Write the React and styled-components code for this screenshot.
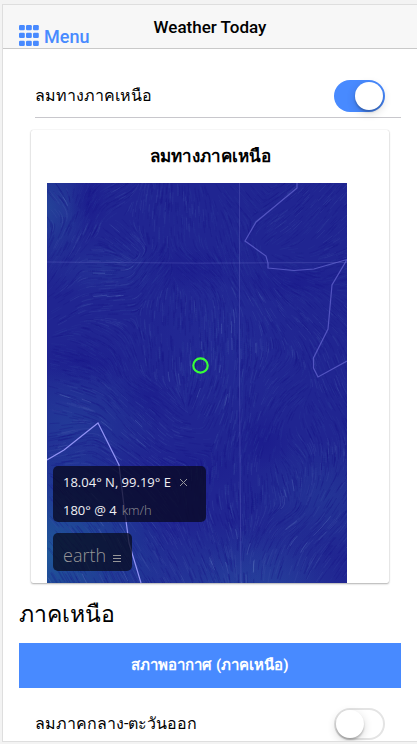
import React from "react";
import styled, { createGlobalStyle } from "styled-components";

const GlobalStyle = createGlobalStyle`
  *, *::before, *::after { box-sizing: border-box; }
  body {
    margin: 0;
    background: #f3f3f3;
    color: #000;
    font-family: Roboto, "Noto Sans", sans-serif;
    font-size: 16px;
  }
`;

const Frame = styled.div`
  display: flex;
  flex-direction: column;
  height: calc(100vh - 6px);
  margin: 4px 0 2px 2px;
  border: 1px solid #dedede;
  border-right: 0;
  background: #fff;
  overflow: hidden;
`;

const Header = styled.header`
  display: grid;
  grid-template-columns: 1fr auto 1fr;
  flex: none;
  height: 44px;
  padding: 0 16px;
  background: #f7f7f7;
  border-bottom: 1px solid #c9c9c9;
`;

const MenuButton = styled.button`
  display: flex;
  align-items: center;
  align-self: end;
  justify-self: start;
  gap: 5px;
  height: 24px;
  padding: 0;
  border: 0;
  background: none;
  color: #488aff;
  font: 500 18px/24px Roboto, sans-serif;
  cursor: pointer;
`;

const MenuIcon = styled.svg`
  width: 20px;
  height: 24px;
  fill: currentColor;
`;

const Title = styled.h1`
  margin: 0;
  font: 500 17px/44px Roboto, sans-serif;
`;

const Content = styled.main`
  flex: 1;
  min-height: 0;
  padding: 24px 16px 0;
  overflow-y: auto;
  scrollbar-width: none;
`;

const ToggleRow = styled.label`
  display: flex;
  align-items: center;
  justify-content: space-between;
  height: 45px;
  margin-left: 16px;
  padding: 2px 16px 0 0;
  border-bottom: 1px solid #c8c7cc;
  line-height: 24px;
`;

const Switch = styled.input`
  appearance: none;
  flex: none;
  width: 51px;
  height: 32px;
  margin: 0;
  padding: 2px;
  border-radius: 16px;
  background: #fff;
  box-shadow: inset 0 0 0 2px #e4e4e4;
  cursor: pointer;

  &::before {
    content: "";
    display: block;
    width: 28px;
    height: 28px;
    border-radius: 50%;
    background: #fff;
    box-shadow: 0 3px 10px rgba(0, 0, 0, 0.16), 0 2px 2px rgba(0, 0, 0, 0.22);
  }

  &:checked {
    background: #488aff;
    box-shadow: none;
  }

  &:checked::before {
    margin-left: auto;
  }
`;

const Card = styled.section`
  margin: 12px 12px 0;
  padding: 0 16px;
  border-radius: 2px;
  background: #fff;
  box-shadow: 0 1px 2px rgba(0, 0, 0, 0.3), 0 0 1px rgba(0, 0, 0, 0.2);
`;

const CardTitle = styled.h2`
  margin: 0;
  font-size: 17px;
  font-weight: 700;
  line-height: 53px;
  text-align: center;
`;

const Map = styled.div`
  position: relative;
  width: 300px;
  max-width: 100%;
  height: 400px;
  overflow: hidden;
  background: #20268f;
`;

const MapDrawing = styled.svg`
  display: block;
  width: 300px;
  height: 400px;
`;

const Overlay = styled.div`
  position: absolute;
  left: 6px;
  bottom: 12px;
  display: flex;
  flex-direction: column;
  align-items: flex-start;
  gap: 11px;
  color: #f0f0f4;
  font-family: "Open Sans", sans-serif;
`;

const Readout = styled.div`
  width: 153px;
  height: 56px;
  padding: 2px 10px;
  border-radius: 5px;
  background: rgba(8, 8, 32, 0.76);
  font-size: 13px;
  line-height: 28px;
  white-space: nowrap;
`;

const ReadoutLine = styled.div`
  display: flex;
  align-items: center;
  gap: ${(p) => p.$gap}px;
  height: 28px;
`;

const Unit = styled.span`
  color: #909096;
  font-weight: 300;
`;

const CloseButton = styled.button`
  display: flex;
  padding: 0;
  border: 0;
  background: none;
  color: #96969c;
  cursor: pointer;
`;

const EarthButton = styled.button`
  display: flex;
  align-items: baseline;
  gap: 7px;
  height: 38px;
  padding: 8px 11px 0 10px;
  border: 0;
  border-radius: 5px;
  background: rgba(8, 12, 32, 0.76);
  color: #969698;
  font: 300 18px/28px "Open Sans", sans-serif;
  cursor: pointer;
`;

const RegionHeading = styled.h2`
  margin: 0;
  padding-top: 4px;
  font-size: 23px;
  font-weight: 400;
  line-height: 56px;
`;

const PrimaryButton = styled.button`
  display: block;
  width: 100%;
  height: 45px;
  margin-bottom: 13px;
  padding: 0;
  border: 0;
  background: #488aff;
  color: #fff;
  font: 700 15px/45px Roboto, "Noto Sans", sans-serif;
  cursor: pointer;
`;

/* Wind samples: x, y, streak angle in degrees (clockwise from east), strength. */
const samples = [
  [5, 20, 50, 0.9], [25, 55, 115, 0.3], [40, 22, 110, 0], [65, 15, 155, 0.3],
  [100, 30, 95, 0.4], [150, 40, 88, 0.3], [195, 15, 50, 0.1], [185, 60, 75, 0.1],
  [225, 35, 145, 0.3], [270, 40, 130, 0.4], [285, 80, 160, 0.3], [75, 55, 40, 0.3],
  [50, 80, 5, 0.8], [15, 85, 120, 0.2], [60, 110, 175, 0.6], [15, 125, 150, 0.3],
  [105, 90, 125, 0.2], [145, 85, 35, 0], [130, 130, 92, 0.5], [180, 150, 90, 0.7],
  [215, 110, 60, 0.4], [250, 95, 20, 0.1], [270, 130, 45, 0.3], [275, 185, 70, 0.5],
  [50, 165, 30, 0.1], [25, 185, 10, 0], [75, 180, 70, 0.1], [110, 180, 90, 0.6],
  [30, 220, 20, 0.8], [75, 230, 50, 0.6], [95, 207, 25, 0.1], [115, 245, 45, 0.3],
  [135, 255, 5, 0.4], [165, 225, 115, 0.8], [195, 220, 90, 0.7], [225, 220, 120, 0.3],
  [245, 205, 145, 0.2], [220, 260, 110, 0], [245, 270, 45, 0.3], [270, 285, 90, 0.4],
  [280, 225, 60, 0.2], [25, 255, 165, 0.8], [70, 270, 35, 0.7], [20, 330, 50, 0.9],
  [60, 380, 65, 0.8], [115, 320, 50, 0.3], [150, 310, 95, 0.2], [175, 340, 70, 0.5],
  [205, 310, 90, 0.4], [240, 310, 70, 0.6], [260, 315, 110, 0.7], [240, 335, 150, 0.9],
  [215, 365, 115, 0.7], [270, 350, 135, 0.6], [290, 310, 125, 0.6], [285, 390, 125, 0.6],
  [245, 385, 108, 0.9], [200, 390, 88, 0.9], [165, 385, 68, 0.6], [110, 380, 60, 0.3],
].map(([x, y, degrees, strength]) => {
  const doubled = (degrees * Math.PI) / 90;
  return { x, y, c: Math.cos(doubled), s: Math.sin(doubled), strength };
});

function windAt(x, y) {
  let c = 0;
  let s = 0;
  let strength = 0;
  let total = 0;
  for (const p of samples) {
    const d = (p.x - x) ** 2 + (p.y - y) ** 2 + 250;
    const w = 1 / (d * d);
    c += p.c * w;
    s += p.s * w;
    strength += p.strength * w;
    total += w;
  }
  return { angle: Math.atan2(s, c) / 2, strength: strength / total };
}

function makeStreaks() {
  let seed = 1804;
  const random = () => {
    seed = (seed * 1664525 + 1013904223) % 4294967296;
    return seed / 4294967296;
  };
  const layers = { dark: "", mid: "", light: "", bright: "" };
  for (let i = 0; i < 6000; i += 1) {
    let x = random() * 300;
    let y = random() * 400;
    const start = windAt(x, y);
    const roll = random();
    let layer = "dark";
    if (roll > 0.38) layer = "mid";
    if (roll > 0.8 && start.strength > 0.28) layer = "light";
    if (roll > 0.97 && start.strength > 0.5) layer = "bright";
    const steps = 3 + Math.floor(random() * 3 + start.strength * 3);
    let previous = start.angle;
    let path = `M${x.toFixed(1)} ${y.toFixed(1)}`;
    for (let k = 0; k < steps; k += 1) {
      let { angle } = windAt(x, y);
      if (Math.cos(angle - previous) < 0) angle += Math.PI;
      previous = angle;
      x += Math.cos(angle) * 2;
      y += Math.sin(angle) * 2;
      path += `L${x.toFixed(1)} ${y.toFixed(1)}`;
    }
    layers[layer] += path;
  }
  return layers;
}

const streaks = makeStreaks();

/* Speed shading: cx, cy, rx, ry, colour, opacity. */
const glows = [
  [0, 25, 45, 60, "#285fa0", 0.5],
  [55, 85, 65, 30, "#2b4ba0", 0.3],
  [20, 240, 95, 65, "#2655a0", 0.42],
  [0, 370, 125, 110, "#1f689c", 0.75],
  [180, 155, 80, 90, "#2937a0", 0.3],
  [170, 410, 110, 70, "#2a58a6", 0.42],
  [225, 410, 75, 70, "#2d5ca5", 0.36],
  [280, 315, 80, 60, "#29539e", 0.32],
  [42, 20, 20, 30, "#17148a", 0.5],
  [145, 85, 60, 24, "#17148a", 0.4],
  [250, 100, 60, 18, "#17148a", 0.4],
  [35, 180, 58, 24, "#17148a", 0.4],
  [100, 215, 30, 26, "#17148a", 0.4],
  [216, 258, 32, 30, "#17148a", 0.5],
  [150, 285, 55, 22, "#17148a", 0.35],
];

function WindMap() {
  return (
    <MapDrawing viewBox="0 0 300 400" role="img" aria-label="แผนที่ลม">
      <defs>
        {glows.map(([, , , , color, opacity], i) => (
          <radialGradient id={`glow${i}`} key={i}>
            <stop offset="0" stopColor={color} stopOpacity={opacity} />
            <stop offset="1" stopColor={color} stopOpacity="0" />
          </radialGradient>
        ))}
      </defs>
      <rect width="300" height="400" fill="#202591" />
      {glows.map(([x, y, rx, ry], i) => (
        <ellipse key={i} cx={x} cy={y} rx={rx} ry={ry} fill={`url(#glow${i})`} />
      ))}
      <g fill="none" strokeWidth="1">
        <path d={streaks.mid} stroke="#2b389a" strokeOpacity="0.28" />
        <path d={streaks.dark} stroke="#171386" strokeOpacity="0.3" />
        <path d={streaks.light} stroke="#4254aa" strokeOpacity="0.26" />
        <path d={streaks.bright} stroke="#6480c4" strokeOpacity="0.32" />
      </g>
      <g fill="none" stroke="#6f74cc" strokeOpacity="0.3">
        <path d="M0 79Q150 81 300 79.5M192.5 0V200L194 400" />
      </g>
      <path
        d="M250 0V5L209 39L198 58L219 73L221 80V85L247 87.5L267 86L300 76.5L285 102L281 146L266.5 175V185L271 194L300 178"
        fill="none"
        stroke="#6464d0"
        strokeOpacity="0.75"
        strokeWidth="1.2"
      />
      <path
        d="M0 277L17 267L51 240L72 282L77 323L82 360L94 400"
        fill="none"
        stroke="#9293f5"
        strokeWidth="1.2"
      />
      <circle cx="153.5" cy="182.5" r="7.2" fill="none" stroke="#37ff37" strokeWidth="2.2" />
    </MapDrawing>
  );
}

function GridIcon() {
  const cells = [0, 7, 14];
  return (
    <MenuIcon viewBox="0 0 20 24" aria-hidden="true">
      {cells.map((x) =>
        cells.map((y) => (
          <rect key={`${x}-${y}`} x={x} y={y * 1.12} width="5.8" height="5.2" rx="1.2" />
        ))
      )}
    </MenuIcon>
  );
}

export default function App() {
  return (
    <>
      <GlobalStyle />
      <Frame>
        <Header>
          <MenuButton type="button">
            <GridIcon />
            Menu
          </MenuButton>
          <Title>Weather Today</Title>
        </Header>
        <Content>
          <ToggleRow>
            ลมทางภาคเหนือ
            <Switch type="checkbox" role="switch" defaultChecked />
          </ToggleRow>
          <Card>
            <CardTitle>ลมทางภาคเหนือ</CardTitle>
            <Map>
              <WindMap />
              <Overlay>
                <Readout>
                  <ReadoutLine $gap={8}>
                    18.04° N, 99.19° E
                    <CloseButton type="button" aria-label="ปิด">
                      <svg width="9" height="9" viewBox="0 0 9 9" stroke="currentColor" aria-hidden="true">
                        <path d="M1 1L8 8M8 1L1 8" />
                      </svg>
                    </CloseButton>
                  </ReadoutLine>
                  <ReadoutLine $gap={5}>
                    180° @ 4 <Unit>km/h</Unit>
                  </ReadoutLine>
                </Readout>
                <EarthButton type="button">
                  earth
                  <svg width="8" height="7" viewBox="0 0 8 7" stroke="currentColor" aria-hidden="true">
                    <path d="M0 0.5H8M0 3.5H8M0 6.5H8" />
                  </svg>
                </EarthButton>
              </Overlay>
            </Map>
          </Card>
          <RegionHeading>ภาคเหนือ</RegionHeading>
          <PrimaryButton type="button">สภาพอากาศ (ภาคเหนือ)</PrimaryButton>
          <ToggleRow>
            ลมภาคกลาง-ตะวันออก
            <Switch type="checkbox" role="switch" />
          </ToggleRow>
        </Content>
      </Frame>
    </>
  );
}
